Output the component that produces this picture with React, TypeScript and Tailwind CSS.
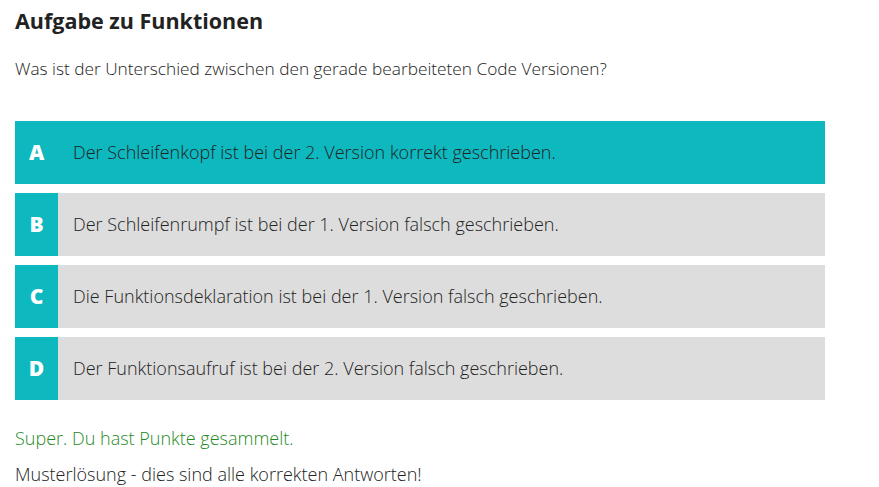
const answers = [
  { letter: "A", text: "Der Schleifenkopf ist bei der 2. Version korrekt geschrieben.", selected: true },
  { letter: "B", text: "Der Schleifenrumpf ist bei der 1. Version falsch geschrieben.", selected: false },
  { letter: "C", text: "Die Funktionsdeklaration ist bei der 1. Version falsch geschrieben.", selected: false },
  { letter: "D", text: "Der Funktionsaufruf ist bei der 2. Version falsch geschrieben.", selected: false },
];

export default function App() {
  return (
    <div className="min-h-[487px] bg-white px-[15px] pt-[6px] text-[#222] font-['Open_Sans',sans-serif]">
      <h2 className="text-[21.5px] leading-[30px] font-bold text-[#222]">Aufgabe zu Funktionen</h2>
      <p className="mt-[20px] text-[17.25px] font-light leading-[26px]">
        Was ist der Unterschied zwischen den gerade bearbeiteten Code Versionen?
      </p>

      <div className="mt-[39px] flex w-[810px] flex-col gap-[9px]">
        {answers.map((a) => (
          <div
            key={a.letter}
            className={`flex h-[63px] items-center ${a.selected ? "bg-[#0db8bf]" : "bg-[#dddddd]"}`}
          >
            <div className="flex h-full w-[43px] items-center justify-center bg-[#0db8bf] text-[21px] font-extrabold text-white">
              {a.letter}
            </div>
            <span className="pl-[15px] text-[18px] font-light text-[#222]">{a.text}</span>
          </div>
        ))}
      </div>

      <p className="mt-[25px] text-[18px] font-light leading-[26px] text-[#1f8a1f]">Super. Du hast Punkte gesammelt.</p>
      <p className="mt-[10px] text-[18px] font-light leading-[26px]">Musterlösung - dies sind alle korrekten Antworten!</p>
    </div>
  );
}
